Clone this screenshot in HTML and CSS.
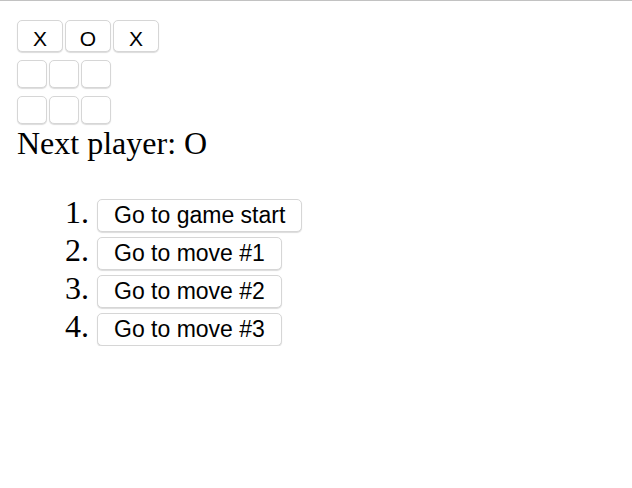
FILE: index.html
```html
<!DOCTYPE html>
<html>
<head>
<meta charset="utf-8">
<link rel="stylesheet" href="styles.css">
</head>
<body>
<div class="game">
  <div class="board">
    <div class="board-row first">
      <button class="square">X</button>
      <button class="square">O</button>
      <button class="square">X</button>
    </div>
    <div class="board-row">
      <button class="square empty"></button>
      <button class="square empty"></button>
      <button class="square empty"></button>
    </div>
    <div class="board-row">
      <button class="square empty"></button>
      <button class="square empty"></button>
      <button class="square empty"></button>
    </div>
  </div>
  <div class="status">Next player: O</div>
  <ol class="moves">
    <li class="move"><span class="num">1.</span><button class="jump">Go to game start</button></li>
    <li class="move"><span class="num">2.</span><button class="jump">Go to move #1</button></li>
    <li class="move"><span class="num">3.</span><button class="jump">Go to move #2</button></li>
    <li class="move"><span class="num">4.</span><button class="jump">Go to move #3</button></li>
  </ol>
</div>
</body>
</html>
```
FILE: styles.css
```css
html, body {
  margin: 0;
  padding: 0;
  background: #fff;
}
body {
  border-top: 1px solid #c2c2c2;
  font-family: "Liberation Serif", "Times New Roman", serif;
  color: #000;
}
.game {
  padding: 19px 0 0 17px;
}
.board {
  display: flex;
  flex-direction: column;
  gap: 8px;
}
.board-row {
  display: flex;
  gap: 2px;
}
.square, .jump {
  box-sizing: border-box;
  background: #fff;
  border: 1px solid #d6d6d6;
  border-radius: 5px;
  box-shadow: 0 1px 1px rgba(0, 0, 0, 0.14);
  font-family: "Liberation Sans", Arial, sans-serif;
  color: #000;
  margin: 0;
}
.square {
  width: 46px;
  height: 32px;
  font-size: 21px;
  line-height: 22px;
  padding: 7px 0 1px;
  text-align: center;
}
.square.empty {
  width: 30px;
  height: 28px;
  padding: 0;
}
.status {
  font-size: 32px;
  line-height: normal;
  margin-top: 1px;
}
.moves {
  list-style: none;
  margin: 32px 0 0;
  padding: 0 0 0 48px;
}
.move {
  display: flex;
  align-items: baseline;
  height: 38px;
}
.num {
  font-size: 32px;
  width: 32px;
}
.jump {
  height: 33px;
  font-size: 23px;
  line-height: 26px;
  padding: 2px 16px 3px;
}
```
